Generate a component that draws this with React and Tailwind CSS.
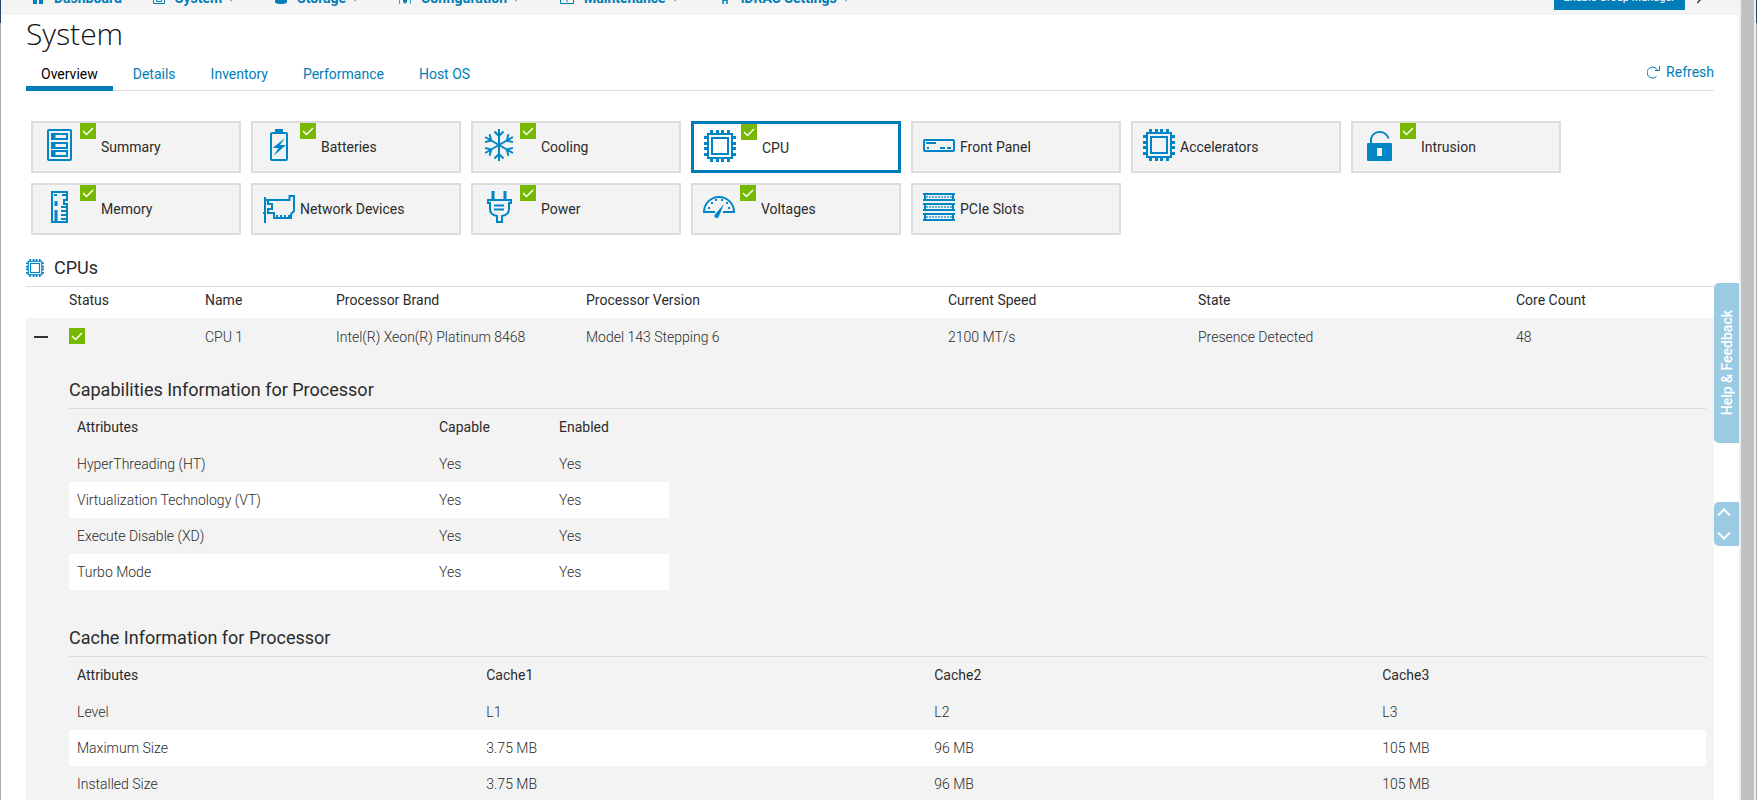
import React, { useState } from 'react';
import clsx from 'clsx';

const navItems = [
  { label: 'Dashboard', icon: HomeIcon, menu: false },
  { label: 'System', icon: SystemIcon, menu: true },
  { label: 'Storage', icon: StorageIcon, menu: true },
  { label: 'Configuration', icon: SlidersIcon, menu: true },
  { label: 'Maintenance', icon: ToolboxIcon, menu: true },
  { label: 'iDRAC Settings', icon: GearIcon, menu: true },
];

const tabs = ['Overview', 'Details', 'Inventory', 'Performance', 'Host OS'];

const components = [
  { name: 'Summary', icon: SummaryIcon, ok: true },
  { name: 'Batteries', icon: BatteryIcon, ok: true },
  { name: 'Cooling', icon: SnowflakeIcon, ok: true },
  { name: 'CPU', icon: ChipIcon, ok: true },
  { name: 'Front Panel', icon: FrontPanelIcon, ok: false },
  { name: 'Accelerators', icon: ChipIcon, ok: false },
  { name: 'Intrusion', icon: LockIcon, ok: true },
  { name: 'Memory', icon: MemoryIcon, ok: true },
  { name: 'Network Devices', icon: NetworkIcon, ok: false },
  { name: 'Power', icon: PlugIcon, ok: true },
  { name: 'Voltages', icon: GaugeIcon, ok: true },
  { name: 'PCIe Slots', icon: SlotsIcon, ok: false },
];

const capabilities = [
  ['HyperThreading (HT)', 'Yes', 'Yes'],
  ['Virtualization Technology (VT)', 'Yes', 'Yes'],
  ['Execute Disable (XD)', 'Yes', 'Yes'],
  ['Turbo Mode', 'Yes', 'Yes'],
];

const caches = [
  ['Level', 'L1', 'L2', 'L3'],
  ['Maximum Size', '3.75 MB', '96 MB', '105 MB'],
  ['Installed Size', '3.75 MB', '96 MB', '105 MB'],
];

// ---- small nav icons ----

function HomeIcon() {
  return (
    <svg viewBox="0 0 12 12" className="h-3 w-3" fill="currentColor">
      <path d="M6 0L0 6h1v6h4V8h2v4h4V6h1z" />
    </svg>
  );
}

function SystemIcon() {
  return (
    <svg viewBox="0 0 12 12" className="h-3 w-3" fill="none" stroke="currentColor">
      <path d="M.5.5h11v11H.5zM3.5 3v6.5h5V3M4 6.5h4" />
    </svg>
  );
}

function StorageIcon() {
  return (
    <svg viewBox="0 0 12 12" className="h-3 w-3" fill="currentColor">
      <path d="M0 2c0-2.700 12-2.700 12 0v8c0 2.700-12 2.700-12 0z" />
    </svg>
  );
}

function SlidersIcon() {
  return (
    <svg viewBox="0 0 12 12" className="h-3 w-3" fill="none" stroke="currentColor">
      <path d="M.5 0v12M11.500 0v12" opacity=".7" />
      <path d="M6 0v12" />
      <path d="M4 9h4" strokeWidth="3" />
    </svg>
  );
}

function ToolboxIcon() {
  return (
    <svg viewBox="0 0 14 12" className="h-3 w-3.5" fill="none" stroke="currentColor">
      <path d="M.5 3.500h13v8H.5zM4.500 3V1h5v2M.5 7.500h13M7 6v4" />
    </svg>
  );
}

function GearIcon() {
  return (
    <svg viewBox="0 0 12 12" className="h-3 w-3" fill="none" stroke="currentColor" strokeWidth="2">
      <circle cx="6" cy="5" r="3" />
      <path d="M4 8v4M8 8v4M0 5h3M9 5h3M6 0v2" strokeWidth="1.500" />
    </svg>
  );
}

// ---- tile icons, 32 x 32 ----

function TileSvg({ children, className = 'h-8 w-8' }) {
  return (
    <svg viewBox="0 0 32 32" className={clsx('shrink-0 text-[#0086c7]', className)} fill="none" stroke="currentColor" strokeWidth="2">
      {children}
    </svg>
  );
}

function SummaryIcon() {
  return (
    <TileSvg>
      <rect x="5" y="1" width="23" height="30" rx="1" />
      {[4, 13, 21].map((y) => (
        <g key={y}>
          <rect x="9" y={y + 1} width="15" height="5" />
          <path d={`M10.500 ${y + 1}v5`} strokeWidth="4" />
        </g>
      ))}
    </TileSvg>
  );
}

function BatteryIcon() {
  return (
    <TileSvg>
      <rect x="8" y="4" width="16" height="27" rx="1" />
      <path d="M12 0h8v4h-8zM22 9L9.500 19h6l-5 8L23 16h-6z" fill="currentColor" stroke="none" />
    </TileSvg>
  );
}

function SnowflakeIcon() {
  return (
    <TileSvg>
      {[0, 60, 120, 180, 240, 300].map((deg) => (
        <path key={deg} d="M16 16V0M11.500 2.500L16 7l4.500-4.500" transform={`rotate(${deg} 16 16)`} />
      ))}
    </TileSvg>
  );
}

function ChipIcon({ className }) {
  return (
    <TileSvg className={className}>
      <rect x="4" y="4" width="24" height="24" />
      <rect x="8" y="8" width="16" height="16" />
      <path d="M7.500 0v4M13.500 0v4M18.500 0v4M24.500 0v4M7.500 28v4M13.500 28v4M18.500 28v4M24.500 28v4M0 7.500h4M0 13.500h4M0 18.500h4M0 24.500h4M28 7.500h4M28 13.500h4M28 18.500h4M28 24.500h4" strokeWidth="3" />
    </TileSvg>
  );
}

function FrontPanelIcon() {
  return (
    <TileSvg>
      <rect x="1" y="11" width="30" height="11" rx="1" />
      <path d="M3 14h10M4 19h2M17 19h5M24 19h4" />
    </TileSvg>
  );
}

function LockIcon() {
  return (
    <TileSvg>
      <path d="M8 15V9.500a9 8.500 0 0 1 17.500 0" />
      <path d="M5 14h23q1 0 1 1v16q0 1-1 1H5q-1 0-1-1V15q0-1 1-1zM14 19v8h5v-8z" fill="currentColor" stroke="none" fillRule="evenodd" />
    </TileSvg>
  );
}

function MemoryIcon() {
  return (
    <TileSvg>
      <path d="M9 1h15v8h-3v4h3v18H9z" />
      <path d="M11 4h3M19 4h4" />
      <path d="M13 19v11M13 10v5" strokeWidth="3" />
      <path d="M18 16h6M18 20h6M18 24h6M18 28h6" />
    </TileSvg>
  );
}

function NetworkIcon() {
  return (
    <TileSvg>
      <path d="M2 6v26M0 22h2" />
      <path d="M2 9h24.500V5H31v15q0 1-1 1l-2 2v4H11v-5H5v-4h4v-5H5V9" />
      <path d="M14 24v3M18 24v3M22 24v3M26 24v3" />
    </TileSvg>
  );
}

function PlugIcon() {
  return (
    <TileSvg>
      <path d="M10 0v8M22 0v8" strokeWidth="3" />
      <path d="M5 9h23v3h-2v6q0 6-7 7v6h-5v-6q-7-1-7-7v-6H5z" />
      <path d="M11 14.500h10M11 18.500h10" />
    </TileSvg>
  );
}

function GaugeIcon() {
  return (
    <TileSvg>
      <path d="M12 21H1a15 15 0 0 1 30 0H20" />
      <path d="M21 13L11.500 24q-.5 3 2 3t2.500-2z" fill="currentColor" stroke="none" />
      <path d="M5 17h2M8 12h2M12 9h2M18 9h2M25 17h2M23 12h2" />
    </TileSvg>
  );
}

function SlotsIcon() {
  return (
    <TileSvg>
      {[2, 12, 22].map((y) => (
        <g key={y}>
          <path d={`M0 ${y + 1}h32M0 ${y + 7}h32M2 ${y + 1}v6M30 ${y + 1}v6`} strokeWidth="2" />
          <path d={`M3 ${y + 4}h26`} strokeWidth="2" strokeDasharray="2 1" opacity=".6" />
        </g>
      ))}
    </TileSvg>
  );
}

function OkBadge() {
  return (
    <svg viewBox="0 0 16 16" className="h-4 w-4 shrink-0" role="img" aria-label="OK">
      <rect width="16" height="16" fill="#76b900" />
      <path d="M3 8l3.500 3.500L13 5" fill="none" stroke="#fff" strokeWidth="1.500" />
    </svg>
  );
}

function TopNav() {
  return (
    <header className="flex h-[15px] shrink-0 items-end justify-between overflow-hidden bg-[#f4f4f4] pl-[31px] pr-9">
      <nav className="flex h-[34px] shrink-0 items-center gap-[31px]">
        {navItems.map(({ label, icon: Icon, menu }) => (
          <a key={label} href="#" className="flex items-center text-sm font-bold text-[#007db8]">
            <Icon />
            <span className="ml-2.5">{label}</span>
            {menu && (
              <svg viewBox="0 0 6 8" className="ml-1.5 mr-2.5 h-2 w-1.5" fill="currentColor" opacity=".5">
                <path d="M0 3h6L3 8z" />
              </svg>
            )}
          </a>
        ))}
      </nav>
      <div className="flex h-[34px] shrink-0 items-center gap-3">
        <button className="h-6 bg-[#007db8] px-2.5 text-[11px] text-white">Enable Group Manager</button>
        <svg viewBox="0 0 6 12" className="h-3 w-1.5" fill="none" stroke="#444" strokeWidth="1.500">
          <path d="M0 1l5 5-5 5" />
        </svg>
      </div>
    </header>
  );
}

function SectionTitle({ children }) {
  return <h3 className="border-b border-[#dcdcdc] text-lg leading-9">{children}</h3>;
}

function DetailTable({ head, rows, widths, className }) {
  return (
    <table className={clsx('table-fixed text-left', className)}>
      <thead>
        <tr className="h-[37px]">
          {head.map((h, i) => (
            <th key={h} className={clsx('px-2 pb-0.5 font-normal', widths[i])}>{h}</th>
          ))}
        </tr>
      </thead>
      <tbody>
        {rows.map((row) => (
          <tr key={row[0]} className="h-9 font-light even:bg-white">
            {row.map((cell, i) => (
              <td key={i} className="px-2">{cell}</td>
            ))}
          </tr>
        ))}
      </tbody>
    </table>
  );
}

export default function App() {
  const [tab, setTab] = useState('Overview');
  const [selected, setSelected] = useState('CPU');
  const [open, setOpen] = useState(true);

  return (
    <div className="relative flex h-screen overflow-hidden bg-white font-[Roboto,sans-serif] text-sm text-[#2b2b2b]">
      <div className="flex w-px shrink-0 flex-col bg-[#aaa]">
        <div className="h-[23px] bg-[#2f4068]" />
      </div>

      <div className="relative flex min-w-0 flex-1 flex-col overflow-hidden">
        <TopNav />

        <main className="px-[25px]">
          <h1 className="font-['Open_Sans',sans-serif] text-[30px] font-light leading-[38px] text-[#111]">System</h1>

          <div className="flex h-[38px] items-end justify-between border-b border-[#dcdcdc]">
            <div className="-mb-px flex gap-[5px]" role="tablist">
              {tabs.map((t) => (
                <button
                  key={t}
                  role="tab"
                  aria-selected={tab === t}
                  onClick={() => setTab(t)}
                  className={clsx(
                    'border-b-[5px] px-[15px] leading-6',
                    tab === t ? 'border-[#007db8] text-black' : 'border-transparent text-[#007db8]'
                  )}
                >
                  {t}
                </button>
              ))}
            </div>
            <button className="mb-1.5 flex items-center gap-1.5 leading-6 text-[#007db8]">
              <svg viewBox="0 0 13 13" className="h-[13px] w-[13px]" fill="none" stroke="currentColor">
                <path d="M9.500 10.500A5.500 5.500 0 1 1 10.500 4M12.500 0v4.500H8" />
              </svg>
              Refresh
            </button>
          </div>

          <div className="flex flex-wrap gap-2.5 px-[5px] pt-[30px]">
            {components.map(({ name, icon: Icon, ok }) => (
              <button
                key={name}
                onClick={() => setSelected(name)}
                className={clsx(
                  'flex h-[52px] w-[210px] items-start gap-[5px] pl-2.5 text-left',
                  selected === name ? 'border-[3px] border-[#007db8] bg-white' : 'border-2 border-[#dcdcdc] bg-[#f3f3f3]'
                )}
              >
                <span className="pt-1.5"><Icon /></span>
                {ok && <OkBadge />}
                <span className="pt-3.5 leading-5">{name}</span>
              </button>
            ))}
          </div>

          <h2 className="mt-[15px] flex items-center gap-2.5 border-b border-[#dcdcdc] text-lg leading-9">
            <ChipIcon className="h-[18px] w-[18px]" />
            CPUs
          </h2>

          <table className="w-full table-fixed text-left">
            <thead>
              <tr className="h-[31px] leading-5">
                <th className="w-[43px]" aria-label="Expand" />
                <th className="w-[136px] pb-1.5 font-normal">Status</th>
                <th className="w-[131px] pb-1.5 font-normal">Name</th>
                <th className="w-[250px] pb-1.5 font-normal">Processor Brand</th>
                <th className="w-[362px] pb-1.5 font-normal">Processor Version</th>
                <th className="w-[250px] pb-1.5 font-normal">Current Speed</th>
                <th className="w-[318px] pb-1.5 font-normal">State</th>
                <th className="pb-1.5 font-normal">Core Count</th>
              </tr>
            </thead>
            <tbody className="bg-[#f3f3f3]">
              <tr className="h-[38px] font-light">
                <td>
                  <button onClick={() => setOpen(!open)} aria-label="Toggle details" className="flex h-5 items-center pl-2">
                    <span className="h-0.5 w-3.5 bg-[#333]" />
                  </button>
                </td>
                <td className="pb-0.5"><OkBadge /></td>
                <td>CPU 1</td>
                <td>Intel(R) Xeon(R) Platinum 8468</td>
                <td>Model 143 Stepping 6</td>
                <td>2100 MT/s</td>
                <td>Presence Detected</td>
                <td>48</td>
              </tr>
              {open && (
                <tr>
                  <td colSpan={8} className="pb-10 pl-[43px] pr-2 pt-4">
                    <SectionTitle>Capabilities Information for Processor</SectionTitle>
                    <DetailTable
                      head={['Attributes', 'Capable', 'Enabled']}
                      rows={capabilities}
                      widths={['w-[362px]', 'w-[120px]', '']}
                      className="mb-[30px] w-[600px]"
                    />
                    <SectionTitle>Cache Information for Processor</SectionTitle>
                    <DetailTable
                      head={['Attributes', 'Cache1', 'Cache2', 'Cache3']}
                      rows={caches}
                      widths={['w-1/4', 'w-[448px]', 'w-[448px]', '']}
                      className="w-full"
                    />
                  </td>
                </tr>
              )}
            </tbody>
          </table>
        </main>

        {/* side tabs floating over the page edge */}
        <div className="absolute right-0 top-[283px] flex w-[25px] flex-col gap-[59px]">
          <button className="flex h-40 items-center justify-center rounded-l-[5px] bg-[#9acbe3] font-medium text-white">
            <span className="rotate-180 [writing-mode:vertical-rl]">Help &amp; Feedback</span>
          </button>
          <div className="flex h-11 flex-col items-start justify-between rounded-l-[5px] bg-[#9acbe3] py-1.5 pl-[3px]">
            <button aria-label="Scroll up">
              <svg viewBox="0 0 14 8" className="h-2 w-3.5" fill="none" stroke="#fff" strokeWidth="2">
                <path d="M1 7.500l6-6 6 6" />
              </svg>
            </button>
            <button aria-label="Scroll down">
              <svg viewBox="0 0 14 8" className="h-2 w-3.5" fill="none" stroke="#fff" strokeWidth="2">
                <path d="M1 .5l6 6 6-6" />
              </svg>
            </button>
          </div>
        </div>
      </div>

      {/* page scrollbar */}
      <div className="w-[17px] shrink-0 border-x-2 border-[#f0f0f0] bg-[#c1c1c1]" />
      <div className="flex w-px shrink-0 flex-col bg-[#aaa]">
        <div className="h-[23px] bg-[#2f4068]" />
      </div>
    </div>
  );
}
